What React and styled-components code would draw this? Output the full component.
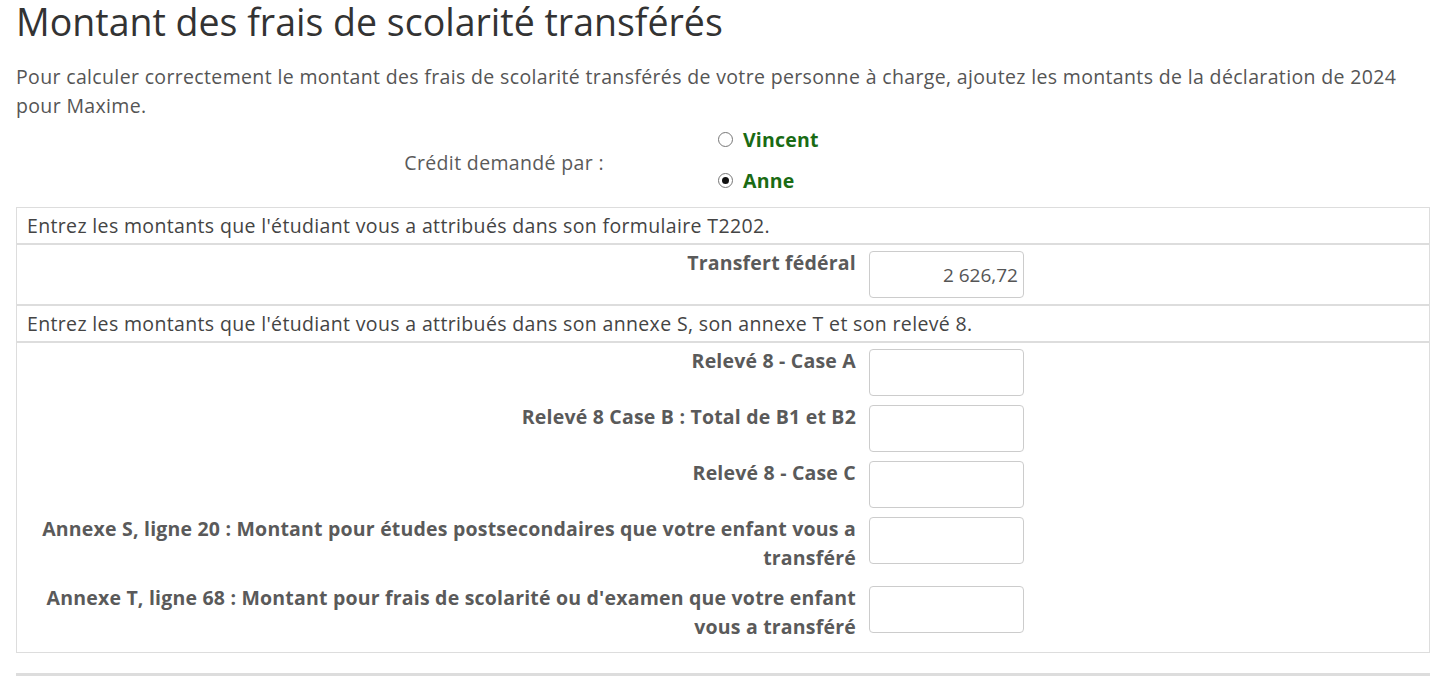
import React, { useState } from "react";
import styled, { createGlobalStyle } from "styled-components";

const GlobalStyle = createGlobalStyle`
  body {
    margin: 0;
    background: #fff;
    font-family: "Open Sans", "Noto Sans", "Liberation Sans", sans-serif;
  }
`;

const Page = styled.div`
  padding: 0 10px 0 16px;
  color: #555;
  font-size: 19.5px;
  letter-spacing: 0.35px;
`;

const Title = styled.h1`
  margin: 0;
  font-size: 37.5px;
  line-height: 44px;
  font-weight: 400;
  letter-spacing: 0;
  color: #333;
`;

const Intro = styled.p`
  margin: 18px 0 0;
  line-height: 29px;
  color: #555;
`;

const ClaimRow = styled.div`
  display: flex;
  align-items: center;
  height: 85px;
`;

const ClaimLabel = styled.div`
  width: 588px;
  text-align: right;
  color: #5a5a5a;
`;

const Options = styled.div`
  display: flex;
  flex-direction: column;
  gap: 12px;
  padding: 0 0 6px 114px;
`;

const Option = styled.label`
  display: flex;
  align-items: center;
  gap: 10px;
  height: 29px;
  font-weight: 700;
  letter-spacing: 0.2px;
  color: #1a6b14;
  cursor: pointer;
`;

const RadioDot = styled.span`
  width: 13px;
  height: 13px;
  border: 1px solid #777;
  border-radius: 50%;
  background: #fff;
  display: flex;
  align-items: center;
  justify-content: center;
  &::after {
    content: "";
    width: 7px;
    height: 7px;
    border-radius: 50%;
    background: ${({ checked }) => (checked ? "#111" : "transparent")};
  }
`;

const Box = styled.div`
  margin-top: 2px;
  border: 1px solid #ddd;
`;

const Heading = styled.div`
  height: 35px;
  display: flex;
  align-items: center;
  padding-left: 10px;
  color: #444;
  border-bottom: 2px solid #ddd;
`;

const Section = styled.div`
  padding-top: 3px;
  border-bottom: ${({ last }) => (last ? "none" : "2px solid #ddd")};
`;

const Field = styled.div`
  display: flex;
  align-items: flex-start;
`;

const FieldLabel = styled.label`
  width: 839px;
  box-sizing: border-box;
  padding: 0 0 11px 10px;
  text-align: right;
  line-height: 29px;
  font-weight: 700;
  letter-spacing: 0.2px;
  color: #5a5a5a;
`;

const Amount = styled.input`
  box-sizing: border-box;
  width: 155px;
  height: 47px;
  margin: 3px 0 6px 13px;
  padding: 0 5px;
  border: 1px solid #ccc;
  border-radius: 4px;
  text-align: right;
  font-family: inherit;
  font-size: 19px;
  color: #555;
  outline: none;
`;

const BottomBar = styled.div`
  margin-top: 20px;
  height: 3px;
  background: #ddd;
`;

const quebecFields = [
  "Relevé 8 - Case A",
  "Relevé 8 Case B : Total de B1 et B2",
  "Relevé 8 - Case C",
  "Annexe S, ligne 20 : Montant pour études postsecondaires que votre enfant vous a transféré",
  "Annexe T, ligne 68 : Montant pour frais de scolarité ou d'examen que votre enfant vous a transféré",
];

export default function App() {
  const [claimant, setClaimant] = useState("Anne");
  const [federal, setFederal] = useState("2 626,72");

  return (
    <>
      <GlobalStyle />
      <Page>
        <Title>Montant des frais de scolarité transférés</Title>
        <Intro>
          Pour calculer correctement le montant des frais de scolarité transférés de votre
          personne à charge, ajoutez les montants de la déclaration de 2024 pour Maxime.
        </Intro>

        <ClaimRow>
          <ClaimLabel>Crédit demandé par :</ClaimLabel>
          <Options>
            {["Vincent", "Anne"].map((name) => (
              <Option key={name} onClick={() => setClaimant(name)}>
                <RadioDot checked={claimant === name} />
                {name}
              </Option>
            ))}
          </Options>
        </ClaimRow>

        <Box>
          <Heading>Entrez les montants que l'étudiant vous a attribués dans son formulaire T2202.</Heading>
          <Section>
            <Field>
              <FieldLabel>Transfert fédéral</FieldLabel>
              <Amount value={federal} onChange={(e) => setFederal(e.target.value)} />
            </Field>
          </Section>
          <Heading>
            Entrez les montants que l'étudiant vous a attribués dans son annexe S, son annexe T et son relevé 8.
          </Heading>
          <Section last>
            {quebecFields.map((label, i) => (
              <Field key={i}>
                <FieldLabel>{label}</FieldLabel>
                <Amount defaultValue="" />
              </Field>
            ))}
          </Section>
        </Box>
        <BottomBar />
      </Page>
    </>
  );
}
